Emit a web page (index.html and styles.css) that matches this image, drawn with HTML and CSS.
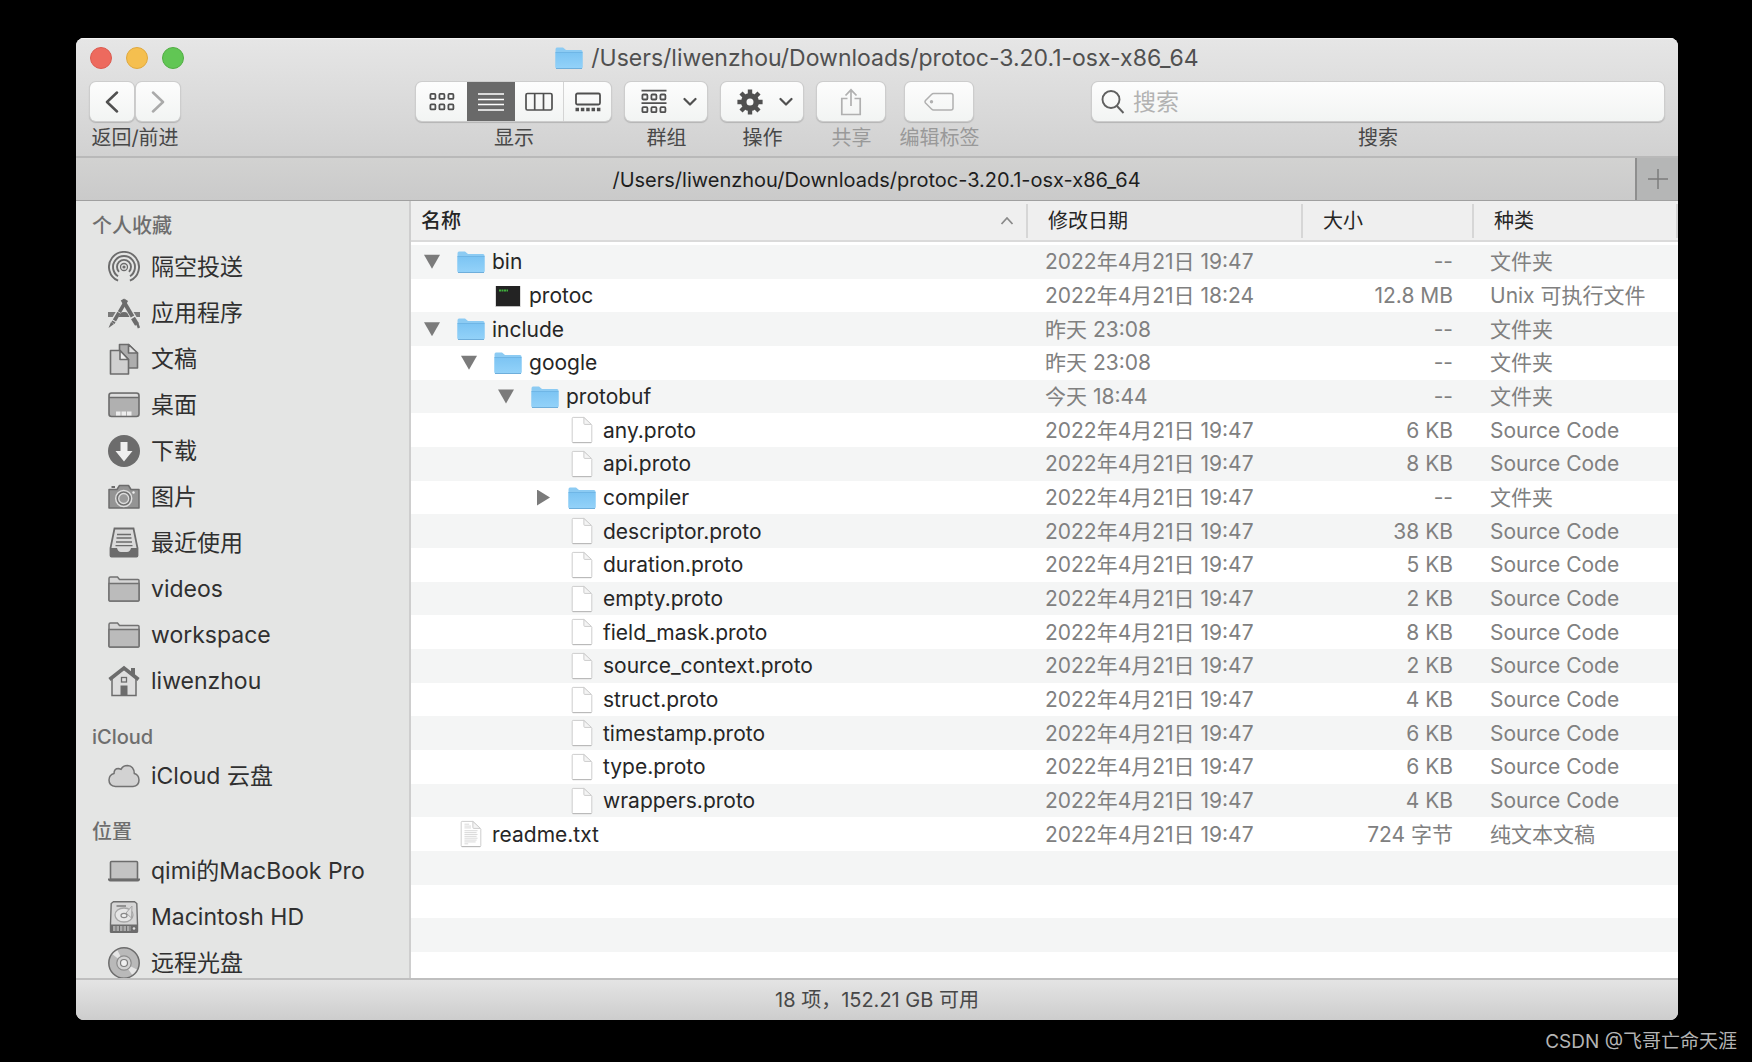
FILE: index.html
```html
<!DOCTYPE html>
<html lang="zh-CN">
<head>
<meta charset="utf-8">
<meta name="viewport" content="width=device-width, initial-scale=1">
<title>/Users/liwenzhou/Downloads/protoc-3.20.1-osx-x86_64</title>
<link rel="stylesheet" href="styles.css">
</head>
<body>
<svg class="sprite" aria-hidden="true">
  <defs>
    <linearGradient id="blue" x1="0" y1="0" x2="0" y2="1"><stop offset="0" stop-color="#7cc4f3"/><stop offset="1" stop-color="#93d2f9"/></linearGradient>
    <symbol id="folder" viewBox="0 0 28 24">
      <path d="M.5 3.500Q.5 1.500 2 1.500H8L11 4H26Q27.500 4 27.500 5.500V21Q27.500 22.500 26 22.500H2Q.5 22.500.5 21Z" fill="#8ccbf3"/>
      <path d="M.5 6.500H27.500V21Q27.500 22.500 26 22.500H2Q.5 22.500.5 21Z" fill="url(#blue)"/>
      <path d="M.5 6.500H27.500" stroke="#6fb6e6" stroke-width="1"/>
      <path d="M1 22.500H27" stroke="#6eaedb" stroke-width="1"/>
    </symbol>
    <symbol id="doc" viewBox="0 0 28 30">
      <path d="M3.500 2.500Q3.500 1.500 4.500 1.500H16L24.500 10V27.500Q24.500 28.500 23.500 28.500H4.500Q3.500 28.500 3.500 27.500Z" fill="#fff" stroke="#c9c9c9"/>
      <path d="M4 28.500H24" stroke="#b5b5b5"/>
      <path d="M16 1.500V8Q16 9 17 9H24Z" fill="#f4f4f4" stroke="#c9c9c9"/>
    </symbol>
    <symbol id="text" viewBox="0 0 28 30">
      <use href="#doc"/>
      <path d="M7 4.500H12M7 6.500H14M7 8.500H14M7 11.500H21M7 13.500H20M7 15.500H21M7 17.500H20M7 19.500H21M7 21.500H20M7 23.500H19M7 25.500H11" stroke="#d6d6d6" stroke-width="1"/>
    </symbol>
    <symbol id="exec" viewBox="0 0 28 24">
      <rect x="1.500" y="2" width="25" height="21" fill="#bdbdbd"/>
      <rect x="2" y="2" width="24" height="20" fill="#232323"/>
      <path d="M5 6.500H14" stroke="#3fae3c" stroke-width="2" stroke-dasharray="2 .5"/>
    </symbol>
    <symbol id="side-folder" viewBox="0 0 32 32">
      <path d="M1 5.500Q1 4 2.500 4H9.500L11.500 6.500H30Q31 6.500 31 7.500V27Q31 28 30 28H2Q1 28 1 27Z" fill="#d6d6d6" stroke="#727272" stroke-width="1.500"/>
      <path d="M1 10.500H31V27Q31 28 30 28H2Q1 28 1 27Z" fill="#bbb" stroke="#727272" stroke-width="1.500"/>
    </symbol>
    <symbol id="chevron" viewBox="0 0 14 10"><path d="M1.500 2L7 7.500L12.500 2" fill="none" stroke="#505050" stroke-width="2.200" stroke-linecap="round" stroke-linejoin="round"/></symbol>
  </defs>
</svg>

<main class="finder">
  <header class="chrome">
    <div class="titlebar">
      <div class="lights">
        <button class="light close" aria-label="关闭"></button>
        <button class="light minimize" aria-label="最小化"></button>
        <button class="light zoom" aria-label="缩放"></button>
      </div>
      <h1 class="title"><svg width="28" height="24" aria-hidden="true"><use href="#folder"/></svg>/Users/liwenzhou/Downloads/protoc-3.20.1-osx-x86_64</h1>
    </div>
    <div class="toolbar">
      <div class="tool">
        <div class="pair">
          <button class="btn nav" aria-label="返回"><svg width="14" height="22" viewBox="0 0 14 22"><path d="M12 1.500L2 11L12 20.500" fill="none" stroke="#505050" stroke-width="2.500" stroke-linecap="round" stroke-linejoin="round"/></svg></button>
          <button class="btn nav" aria-label="前进"><svg width="14" height="22" viewBox="0 0 14 22"><path d="M2 1.500L12 11L2 20.500" fill="none" stroke="#aaa" stroke-width="2.500" stroke-linecap="round" stroke-linejoin="round"/></svg></button>
        </div>
        <span class="caption">返回/前进</span>
      </div>
      <div class="gap-wide"></div>
      <div class="tools">
        <div class="tool">
          <div class="segments">
            <button class="seg" aria-label="图标"><svg width="26" height="20" viewBox="0 0 26 20" fill="none" stroke="#505050" stroke-width="1.800"><rect x="1.400" y="1.900" width="5" height="5" rx="1"/><rect x="10.400" y="1.900" width="5" height="5" rx="1"/><rect x="19.400" y="1.900" width="5" height="5" rx="1"/><rect x="1.400" y="12.400" width="5" height="5" rx="1"/><rect x="10.400" y="12.400" width="5" height="5" rx="1"/><rect x="19.400" y="12.400" width="5" height="5" rx="1"/></svg></button>
            <button class="seg on" aria-label="列表" aria-pressed="true"><svg width="26" height="20" viewBox="0 0 26 20"><path d="M0 2H26M0 7.500H26M0 12.500H26M0 18H26" stroke="#fff" stroke-width="1.600"/></svg></button>
            <button class="seg" aria-label="分栏"><svg width="28" height="20" viewBox="0 0 28 20" fill="none" stroke="#505050" stroke-width="1.700"><rect x="1" y="1.500" width="26" height="16.500" rx="1.500"/><path d="M9.700 1.500V18M18.500 1.500V18"/></svg></button>
            <button class="seg" aria-label="画廊"><svg width="26" height="20" viewBox="0 0 26 20"><rect x="1" y="1.500" width="24" height="11" rx="1.500" fill="none" stroke="#505050" stroke-width="1.800"/><path d="M.5 17.500H25.500" stroke="#505050" stroke-width="3.600" stroke-dasharray="3.500 1.850"/></svg></button>
          </div>
          <span class="caption">显示</span>
        </div>
        <div class="tool">
          <button class="btn menu" aria-label="群组"><svg width="26" height="26" viewBox="0 0 26 26" fill="none" stroke="#505050" stroke-width="1.800"><path d="M.5 1.700H25.500M.5 14.200H25.500"/><rect x="1.400" y="5.500" width="5" height="5" rx="1"/><rect x="10.400" y="5.500" width="5" height="5" rx="1"/><rect x="19.400" y="5.500" width="5" height="5" rx="1"/><rect x="1.400" y="18.200" width="5" height="5" rx="1"/><rect x="10.400" y="18.200" width="5" height="5" rx="1"/><rect x="19.400" y="18.200" width="5" height="5" rx="1"/></svg><svg width="14" height="10"><use href="#chevron"/></svg></button>
          <span class="caption">群组</span>
        </div>
        <div class="tool">
          <button class="btn menu" aria-label="操作"><svg width="26" height="26" viewBox="-13 -13 26 26"><circle r="6.300" fill="none" stroke="#505050" stroke-width="5.600"/><g stroke="#505050" stroke-width="4.400"><path d="M0 -8V-12.600M0 8V12.600M-8 0H-12.600M8 0H12.600M-5.800 -5.800L-9 -9M5.800 5.800L9 9M-5.800 5.800L-9 9M5.800 -5.800L9 -9"/></g></svg><svg width="14" height="10"><use href="#chevron"/></svg></button>
          <span class="caption">操作</span>
        </div>
        <div class="tool dim">
          <button class="btn" aria-label="共享" disabled><svg width="22" height="28" viewBox="0 0 22 28" fill="none" stroke="#b0b0b0" stroke-width="1.700"><path d="M7.500 10.500H1.800V26.500H20.200V10.500H14.500M11 18V2M5.500 7.500L11 1.800L16.500 7.500"/></svg></button>
          <span class="caption">共享</span>
        </div>
        <div class="tool dim">
          <button class="btn" aria-label="编辑标签" disabled><svg width="30" height="20" viewBox="0 0 30 20"><path d="M9.500 1.500H27Q29 1.500 29 3.500V16Q29 18 27 18H9.500Q8.500 18 7.500 17L1.500 11Q.5 9.800 1.500 8.500L7.500 2.500Q8.500 1.500 9.500 1.500Z" fill="none" stroke="#b0b0b0" stroke-width="1.500"/><circle cx="7.500" cy="9.800" r="1.700" fill="#b0b0b0"/></svg></button>
          <span class="caption">编辑标签</span>
        </div>
      </div>
      <div class="gap-narrow"></div>
      <div class="tool search">
        <div class="field">
          <svg width="24" height="26" viewBox="0 0 24 26" fill="none" stroke="#606060" stroke-width="1.900"><circle cx="10" cy="10.500" r="8.500"/><path d="M16 17L22.500 24"/></svg>
          <input id="q" type="search" placeholder="搜索">
        </div>
        <label class="caption" for="q">搜索</label>
      </div>
    </div>
  </header>

  <div class="tabs">
    <div class="tab">/Users/liwenzhou/Downloads/protoc-3.20.1-osx-x86_64</div>
    <button class="add" aria-label="新建标签页"><svg width="20" height="20" viewBox="0 0 20 20"><path d="M10 0V20M0 10H20" stroke="#7c7c7c" stroke-width="1.500"/></svg></button>
  </div>

  <div class="panes">
    <nav class="sidebar">
      <h2>个人收藏</h2>
      <a href="#"><svg viewBox="0 0 32 32" fill="none" stroke="#6c6c6c" stroke-width="1.900"><path d="M10.100 29.700A15 15 0 1 1 21.900 29.700"/><path d="M10 25.200A11 11 0 1 1 22 25.200"/><path d="M11 20.800A7 7 0 1 1 21 20.800"/><circle cx="16" cy="16" r="3.500" stroke-width="1.300"/><circle cx="16" cy="16" r="1.600" fill="#6c6c6c" stroke="none"/></svg>隔空投送</a>
      <a href="#"><svg viewBox="0 0 32 32"><path d="M0 15H32V20H26L24 17.500H22L23 20H9L11 17H8L6 20H0Z" fill="#7a7a7a"/><path d="M14.500 3L28 26" stroke="#e4e5e4" stroke-width="7"/><path d="M18 3.500L4 27" stroke="#e4e5e4" stroke-width="6"/><path d="M10.500 20L13 15.500H19L21.500 20Z" fill="#6c6c6c"/><path d="M14.500 2.500L24.500 19.500" stroke="#6c6c6c" stroke-width="4"/><path d="M25 21L29 27.500" stroke="#6c6c6c" stroke-width="4.500"/><path d="M29 26L31 31" stroke="#6c6c6c" stroke-width="2.500"/><path d="M18.500 3L5 26" stroke="#6c6c6c" stroke-width="3.600" stroke-dasharray="14 .8 9 1"/><path d="M3 25L6 27L.5 31Z" fill="#6c6c6c"/></svg>应用程序</a>
      <a href="#"><svg viewBox="0 0 32 32" stroke="#6c6c6c" stroke-width="1.600" stroke-linejoin="round"><path d="M11.500 1.500H20.500L29.500 10V25H11.500Z" fill="#adadad"/><path d="M20.500 1.500V10H29.500Z" fill="#e3e3e3"/><path d="M2.500 7.500H12L20.500 16.500V31H2.500Z" fill="#d0d0d0"/><path d="M12 7.500V16.500H20.500Z" fill="#f0f0f0"/></svg>文稿</a>
      <a href="#"><svg viewBox="0 0 32 32"><rect x="1" y="4" width="30" height="23.500" rx="2.500" fill="#b0b0b0" stroke="#6c6c6c" stroke-width="1.600"/><path d="M2 8.500V6.500Q2 5 3.500 5H28.500Q30 5 30 6.500V8Z" fill="#dedede"/><path d="M1 8.500H31" stroke="#6c6c6c" stroke-width="1.500"/><path d="M8 24.500H24.500" stroke="#eee" stroke-width="4" stroke-dasharray="4.500 1"/></svg>桌面</a>
      <a href="#"><svg viewBox="0 0 32 32"><circle cx="16" cy="16" r="16" fill="#6c6c6c"/><path d="M12.500 7H19.500V16H24.500L16 26.500L7.500 16H12.500Z" fill="#f0f0f0"/></svg>下载</a>
      <a href="#"><svg viewBox="0 0 32 32"><path d="M1 8.500H9L11.500 4.500H20.500L23 8.500H31V27H1Z" fill="#949494" stroke="#6c6c6c" stroke-width="1.500" stroke-linejoin="round"/><path d="M3.500 6H7" stroke="#6c6c6c" stroke-width="2"/><circle cx="15.700" cy="17.500" r="8" fill="#707070" stroke="#dedede" stroke-width="1.500"/><circle cx="15.700" cy="17.500" r="5" fill="#999" stroke="#ddd" stroke-width="1.300"/><circle cx="25.500" cy="11.500" r="1.200" fill="#eee"/></svg>图片</a>
      <a href="#"><svg viewBox="0 0 32 32"><path d="M6.500 1.500H25.500L29.500 21V28.500Q29.500 29.500 28.500 29.500H3.500Q2.500 29.500 2.500 28.500V21Z" fill="#dadada" stroke="#6c6c6c" stroke-width="1.800"/><path d="M9 7.500H23M8.500 11H23.500M8 15H24M7.500 18.700H24.500" stroke="#6c6c6c" stroke-width="1.300"/><path d="M2.500 21H9Q10 25 13 25H19Q22 25 23 21H29.500V29.500H2.500Z" fill="#6c6c6c"/></svg>最近使用</a>
      <a href="#"><svg><use href="#side-folder"/></svg>videos</a>
      <a href="#"><svg><use href="#side-folder"/></svg>workspace</a>
      <a href="#"><svg viewBox="0 0 32 32"><path d="M4 13L16 4L28 13V30.500H4Z" fill="#dedede" stroke="#6c6c6c" stroke-width="1.500"/><path d="M23 3H27V12L23 9Z" fill="#6c6c6c"/><path d="M1.500 14.500L16 3L30.500 14.500" fill="none" stroke="#6c6c6c" stroke-width="3.600"/><rect x="13.500" y="12.500" width="5" height="4.500" fill="none" stroke="#6c6c6c" stroke-width="1.300"/><rect x="12.500" y="20.500" width="7" height="10" fill="#6c6c6c"/></svg>liwenzhou</a>
      <h2>iCloud</h2>
      <a href="#"><svg viewBox="0 0 32 32"><path d="M7.500 26.500Q1 26 1 20Q1 15 6 13.500Q6 8.500 10.500 8.500L13 9.300Q15 5.500 19.500 5.500Q26 6 26.300 13.500Q31 15 31 20Q31 26 25 26.500Z" fill="#d2d2d2" stroke="#727272" stroke-width="1.500"/></svg>iCloud 云盘</a>
      <h2>位置</h2>
      <a href="#"><svg viewBox="0 0 32 32"><rect x="2.500" y="6.500" width="27" height="18" rx="1" fill="#c3c3c3" stroke="#6c6c6c" stroke-width="1.600"/><path d="M0 23.500H32V25Q31 26.500 29.500 26.500H2.500Q1 26.500 0 25Z" fill="#6c6c6c"/></svg>qimi的MacBook Pro</a>
      <a href="#"><svg viewBox="0 0 32 32"><path d="M5.500 .8H26.500L28.800 2.500L29.500 23V30.500Q29.500 31.300 28.500 31.300H3.500Q2.500 31.300 2.500 30.500V23L3.200 2.500Z" fill="#d6d6d6" stroke="#6c6c6c" stroke-width="1.400"/><path d="M3 23.500H29V31H3Z" fill="#6c6c6c"/><path d="M5 27.500H23" stroke="#aaa" stroke-width="5" stroke-dasharray="2.500 1"/><circle cx="26" cy="27.500" r="1.300" fill="#ddd"/><path d="M8.500 5H18" stroke="#6c6c6c" stroke-width="1.300"/><ellipse cx="16" cy="14" rx="9" ry="7" fill="#e6e6e6" stroke="#a6a6a6" stroke-width="1.300"/><path d="M24 5L23.500 17L18 12Z" fill="#ddd" stroke="#a6a6a6"/><ellipse cx="16" cy="14.500" rx="3" ry="2.200" fill="#eee" stroke="#888" stroke-width="1.200"/></svg>Macintosh HD</a>
      <a href="#"><svg viewBox="0 0 32 32"><circle cx="16" cy="16" r="15.200" fill="#b9b9b9"/><path d="M16 16L4 7L9 2.500ZM16 16L30 23L25 29Z" fill="#e6e6e6"/><circle cx="16" cy="16" r="15.200" fill="none" stroke="#6c6c6c" stroke-width="1.500"/><circle cx="16" cy="16" r="7.200" fill="#d2d2d2" stroke="#8c8c8c" stroke-width="1.200"/><circle cx="16" cy="16" r="3.500" fill="#f0f0f0" stroke="#7c7c7c" stroke-width="1.200"/></svg>远程光盘</a>
    </nav>

    <table class="list">
      <thead>
        <tr>
          <th class="sorted" aria-sort="ascending">名称<svg width="14" height="10" viewBox="0 0 14 10"><path d="M1.500 8L7 2L12.500 8" fill="none" stroke="#8a8a8a" stroke-width="1.800"/></svg></th>
          <th>修改日期</th><th>大小</th><th>种类</th>
        </tr>
      </thead>
      <tbody>
        <tr><td class="name"><button class="turn open" aria-label="折叠"></button><svg class="pic"><use href="#folder"/></svg>bin</td><td>2022年4月21日 19:47</td><td>--</td><td>文件夹</td></tr>
        <tr><td class="name l1"><svg class="pic"><use href="#exec"/></svg>protoc</td><td>2022年4月21日 18:24</td><td>12.8 MB</td><td>Unix 可执行文件</td></tr>
        <tr><td class="name"><button class="turn open" aria-label="折叠"></button><svg class="pic"><use href="#folder"/></svg>include</td><td>昨天 23:08</td><td>--</td><td>文件夹</td></tr>
        <tr><td class="name l1"><button class="turn open" aria-label="折叠"></button><svg class="pic"><use href="#folder"/></svg>google</td><td>昨天 23:08</td><td>--</td><td>文件夹</td></tr>
        <tr><td class="name l2"><button class="turn open" aria-label="折叠"></button><svg class="pic"><use href="#folder"/></svg>protobuf</td><td>今天 18:44</td><td>--</td><td>文件夹</td></tr>
        <tr><td class="name l3"><svg class="pic"><use href="#doc"/></svg>any.proto</td><td>2022年4月21日 19:47</td><td>6 KB</td><td>Source Code</td></tr>
        <tr><td class="name l3"><svg class="pic"><use href="#doc"/></svg>api.proto</td><td>2022年4月21日 19:47</td><td>8 KB</td><td>Source Code</td></tr>
        <tr><td class="name l3"><button class="turn" aria-label="展开"></button><svg class="pic"><use href="#folder"/></svg>compiler</td><td>2022年4月21日 19:47</td><td>--</td><td>文件夹</td></tr>
        <tr><td class="name l3"><svg class="pic"><use href="#doc"/></svg>descriptor.proto</td><td>2022年4月21日 19:47</td><td>38 KB</td><td>Source Code</td></tr>
        <tr><td class="name l3"><svg class="pic"><use href="#doc"/></svg>duration.proto</td><td>2022年4月21日 19:47</td><td>5 KB</td><td>Source Code</td></tr>
        <tr><td class="name l3"><svg class="pic"><use href="#doc"/></svg>empty.proto</td><td>2022年4月21日 19:47</td><td>2 KB</td><td>Source Code</td></tr>
        <tr><td class="name l3"><svg class="pic"><use href="#doc"/></svg>field_mask.proto</td><td>2022年4月21日 19:47</td><td>8 KB</td><td>Source Code</td></tr>
        <tr><td class="name l3"><svg class="pic"><use href="#doc"/></svg>source_context.proto</td><td>2022年4月21日 19:47</td><td>2 KB</td><td>Source Code</td></tr>
        <tr><td class="name l3"><svg class="pic"><use href="#doc"/></svg>struct.proto</td><td>2022年4月21日 19:47</td><td>4 KB</td><td>Source Code</td></tr>
        <tr><td class="name l3"><svg class="pic"><use href="#doc"/></svg>timestamp.proto</td><td>2022年4月21日 19:47</td><td>6 KB</td><td>Source Code</td></tr>
        <tr><td class="name l3"><svg class="pic"><use href="#doc"/></svg>type.proto</td><td>2022年4月21日 19:47</td><td>6 KB</td><td>Source Code</td></tr>
        <tr><td class="name l3"><svg class="pic"><use href="#doc"/></svg>wrappers.proto</td><td>2022年4月21日 19:47</td><td>4 KB</td><td>Source Code</td></tr>
        <tr><td class="name"><svg class="pic"><use href="#text"/></svg>readme.txt</td><td>2022年4月21日 19:47</td><td>724 字节</td><td>纯文本文稿</td></tr>
        <tr></tr>
        <tr></tr>
        <tr></tr>
        <tr class="stub"></tr>
      </tbody>
    </table>
  </div>

  <footer class="status">18 项，152.21 GB 可用</footer>
</main>
<p class="credit">CSDN @飞哥亡命天涯</p>
</body>
</html>
```
FILE: styles.css
```css
* { box-sizing: border-box; }

body {
  margin: 0;
  height: 100vh;
  min-width: 1240px;
  padding: 38px 74px 0 76px;
  display: flex;
  flex-direction: column;
  background: #000;
  color: #262626;
  font-family: Inter, "Noto Sans CJK SC", sans-serif;
  font-size: 20px;
}

button, input { font: inherit; color: inherit; }
button { border: 0; padding: 0; background: none; }
svg { flex: none; display: block; }
.sprite { position: absolute; width: 0; height: 0; }

.finder {
  flex: 1;
  min-height: 0;
  display: flex;
  flex-direction: column;
  overflow: hidden;
  border-radius: 8px;
  background: #fff;
}

/* title bar and toolbar */
.chrome {
  height: 120px;
  flex: none;
  border-bottom: 2px solid #b9b9b9;
  background: linear-gradient(#e6e6e6, #d1d1d1);
  box-shadow: inset 0 1px #f4f4f4;
}
.titlebar {
  display: grid;
  grid-template-columns: 120px 1fr 120px;
  align-items: center;
  height: 40px;
  padding: 0 14px;
}
.lights { display: flex; gap: 14px; }
.light { width: 22px; height: 22px; border-radius: 50%; }
.close { background: #ed6a5e; border: 1px solid #dc5b50; }
.minimize { background: #f5bf4f; border: 1px solid #e0a93e; }
.zoom { background: #61c654; border: 1px solid #51ae43; }
.title {
  margin: 0;
  display: flex;
  justify-content: center;
  align-items: center;
  gap: 8px;
  font-size: 23px;
  font-weight: 400;
  line-height: 30px;
  color: #505050;
}

.toolbar {
  display: flex;
  align-items: flex-start;
  padding: 4px 14px 0;
}
.tools { display: flex; gap: 14px; }
.gap-wide { flex: 21; }
.gap-narrow { flex: 10; }
.tool { display: flex; flex-direction: column; align-items: center; }
.caption {
  height: 34px;
  line-height: 34px;
  font-size: 20px;
  color: #484848;
}
.dim .caption { color: #999; }
.pair { display: flex; gap: 2px; }
.btn, .segments, .field {
  height: 39px;
  border-radius: 6px;
  background: linear-gradient(#fdfdfd, #f2f4f3);
  box-shadow: 0 0 0 1px #cdcdcd, 0 1px 1px 1px #b4b4b4;
}
.btn {
  width: 68px;
  display: flex;
  align-items: center;
  justify-content: center;
}
.btn.nav { width: 44px; }
.btn.menu { width: 82px; gap: 16px; padding-left: 6px; }
.segments { display: flex; overflow: hidden; }
.seg {
  width: 48px;
  display: flex;
  align-items: center;
  justify-content: center;
}
.seg:first-child { width: 51px; }
.seg:last-child { border-left: 1px solid #d4d4d4; }
.seg.on { background: #696969; }

.search { flex: 0 1 572px; align-items: stretch; text-align: center; }
.field { display: flex; align-items: center; gap: 8px; padding: 0 9px; }
.field input {
  flex: 1;
  min-width: 0;
  border: 0;
  padding: 0;
  outline: 0;
  background: none;
  font-size: 23px;
}
.field input::placeholder { color: #b2b2b2; }

/* tab bar */
.tabs {
  flex: none;
  display: flex;
  height: 43px;
  border-bottom: 1px solid #a0a0a0;
  background: linear-gradient(#d2d2d1, #cacaca);
}
.tab { flex: 1; text-align: center; line-height: 44px; font-size: 20px; color: #1e1e1e; padding-left: 42px; }
.add {
  width: 43px;
  display: flex;
  align-items: center;
  justify-content: center;
  border-left: 2px solid #8e8e8e;
  background: #b5b6b6;
}

.panes { flex: 1; min-height: 0; display: flex; }

/* sidebar */
.sidebar {
  width: 335px;
  flex: none;
  overflow: hidden;
  border-right: 2px solid #cecece;
  background: #e4e5e4;
}
.sidebar h2 {
  margin: 0;
  padding: 8px 16px 0;
  height: 43px;
  line-height: 35px;
  font-size: 20px;
  font-weight: 500;
  color: #6e6e6e;
}
.sidebar a + h2 { height: 49px; padding-top: 16px; }
.sidebar a {
  display: flex;
  align-items: center;
  gap: 11px;
  height: 46px;
  padding-left: 32px;
  font-size: 23px;
  line-height: 30px;
  color: #303030;
  text-decoration: none;
}
.sidebar a svg { width: 32px; height: 32px; }

/* file list */
.list { flex: 1; min-width: 0; display: flex; flex-direction: column; }
.list tr { display: grid; grid-template-columns: 1fr 275px 171px 204px; }
.list thead tr {
  height: 41px;
  padding: 3px 0 4px;
  background: #efefef;
  border-bottom: 2px solid #dadada;
}
.list th {
  padding: 0 0 0 20px;
  border-right: 2px solid #d6d6d6;
  text-align: left;
  font-size: 20px;
  font-weight: 400;
  line-height: 34px;
  color: #262626;
}
.list th.sorted {
  display: flex;
  align-items: center;
  justify-content: space-between;
  padding: 0 12px 0 10px;
  font-weight: 500;
}
.list tbody {
  flex: 1;
  min-height: 0;
  overflow: hidden;
  display: flex;
  flex-direction: column;
  padding-top: 3px;
}
.list tbody tr { flex: 1; min-height: 30px; align-items: center; }
.list tbody tr.stub { flex: 0 0 26px; min-height: 0; }
.list tbody tr:nth-child(odd) { background: #f4f5f5; }
.list td {
  padding: 0 0 0 17px;
  line-height: 31px;
  font-size: 21px;
  color: #808080;
  white-space: nowrap;
}
.list td:nth-child(3) { padding: 0 21px 0 0; text-align: right; }
.list td:nth-child(4) { padding-left: 16px; }
.list td.name {
  display: flex;
  align-items: center;
  justify-content: flex-start;
  gap: 7px;
  padding-left: 46px;
  color: #262626;
}
.list td.l1 { padding-left: 83px; }
.list td.l2 { padding-left: 120px; }
.list td.l3 { padding-left: 157px; }
.pic { width: 28px; height: 28px; }
.turn {
  width: 16px;
  height: 16px;
  margin: 0 10px 0 -33px;
  background: #7b7b7b;
  clip-path: polygon(2px 0, 15px 8px, 2px 16px);
}
.turn.open { clip-path: polygon(0 1px, 16px 1px, 8px 15px); }

.status {
  flex: none;
  height: 42px;
  line-height: 40px;
  border-top: 2px solid #bfbfbf;
  background: linear-gradient(#e4e4e4, #cdcdcd);
  text-align: center;
  font-size: 20px;
  color: #484848;
}

.credit {
  flex: none;
  margin: 0 -59px 0 0;
  height: 42px;
  line-height: 44px;
  text-align: right;
  font-size: 19px;
  color: #b4b4b4;
}
```
